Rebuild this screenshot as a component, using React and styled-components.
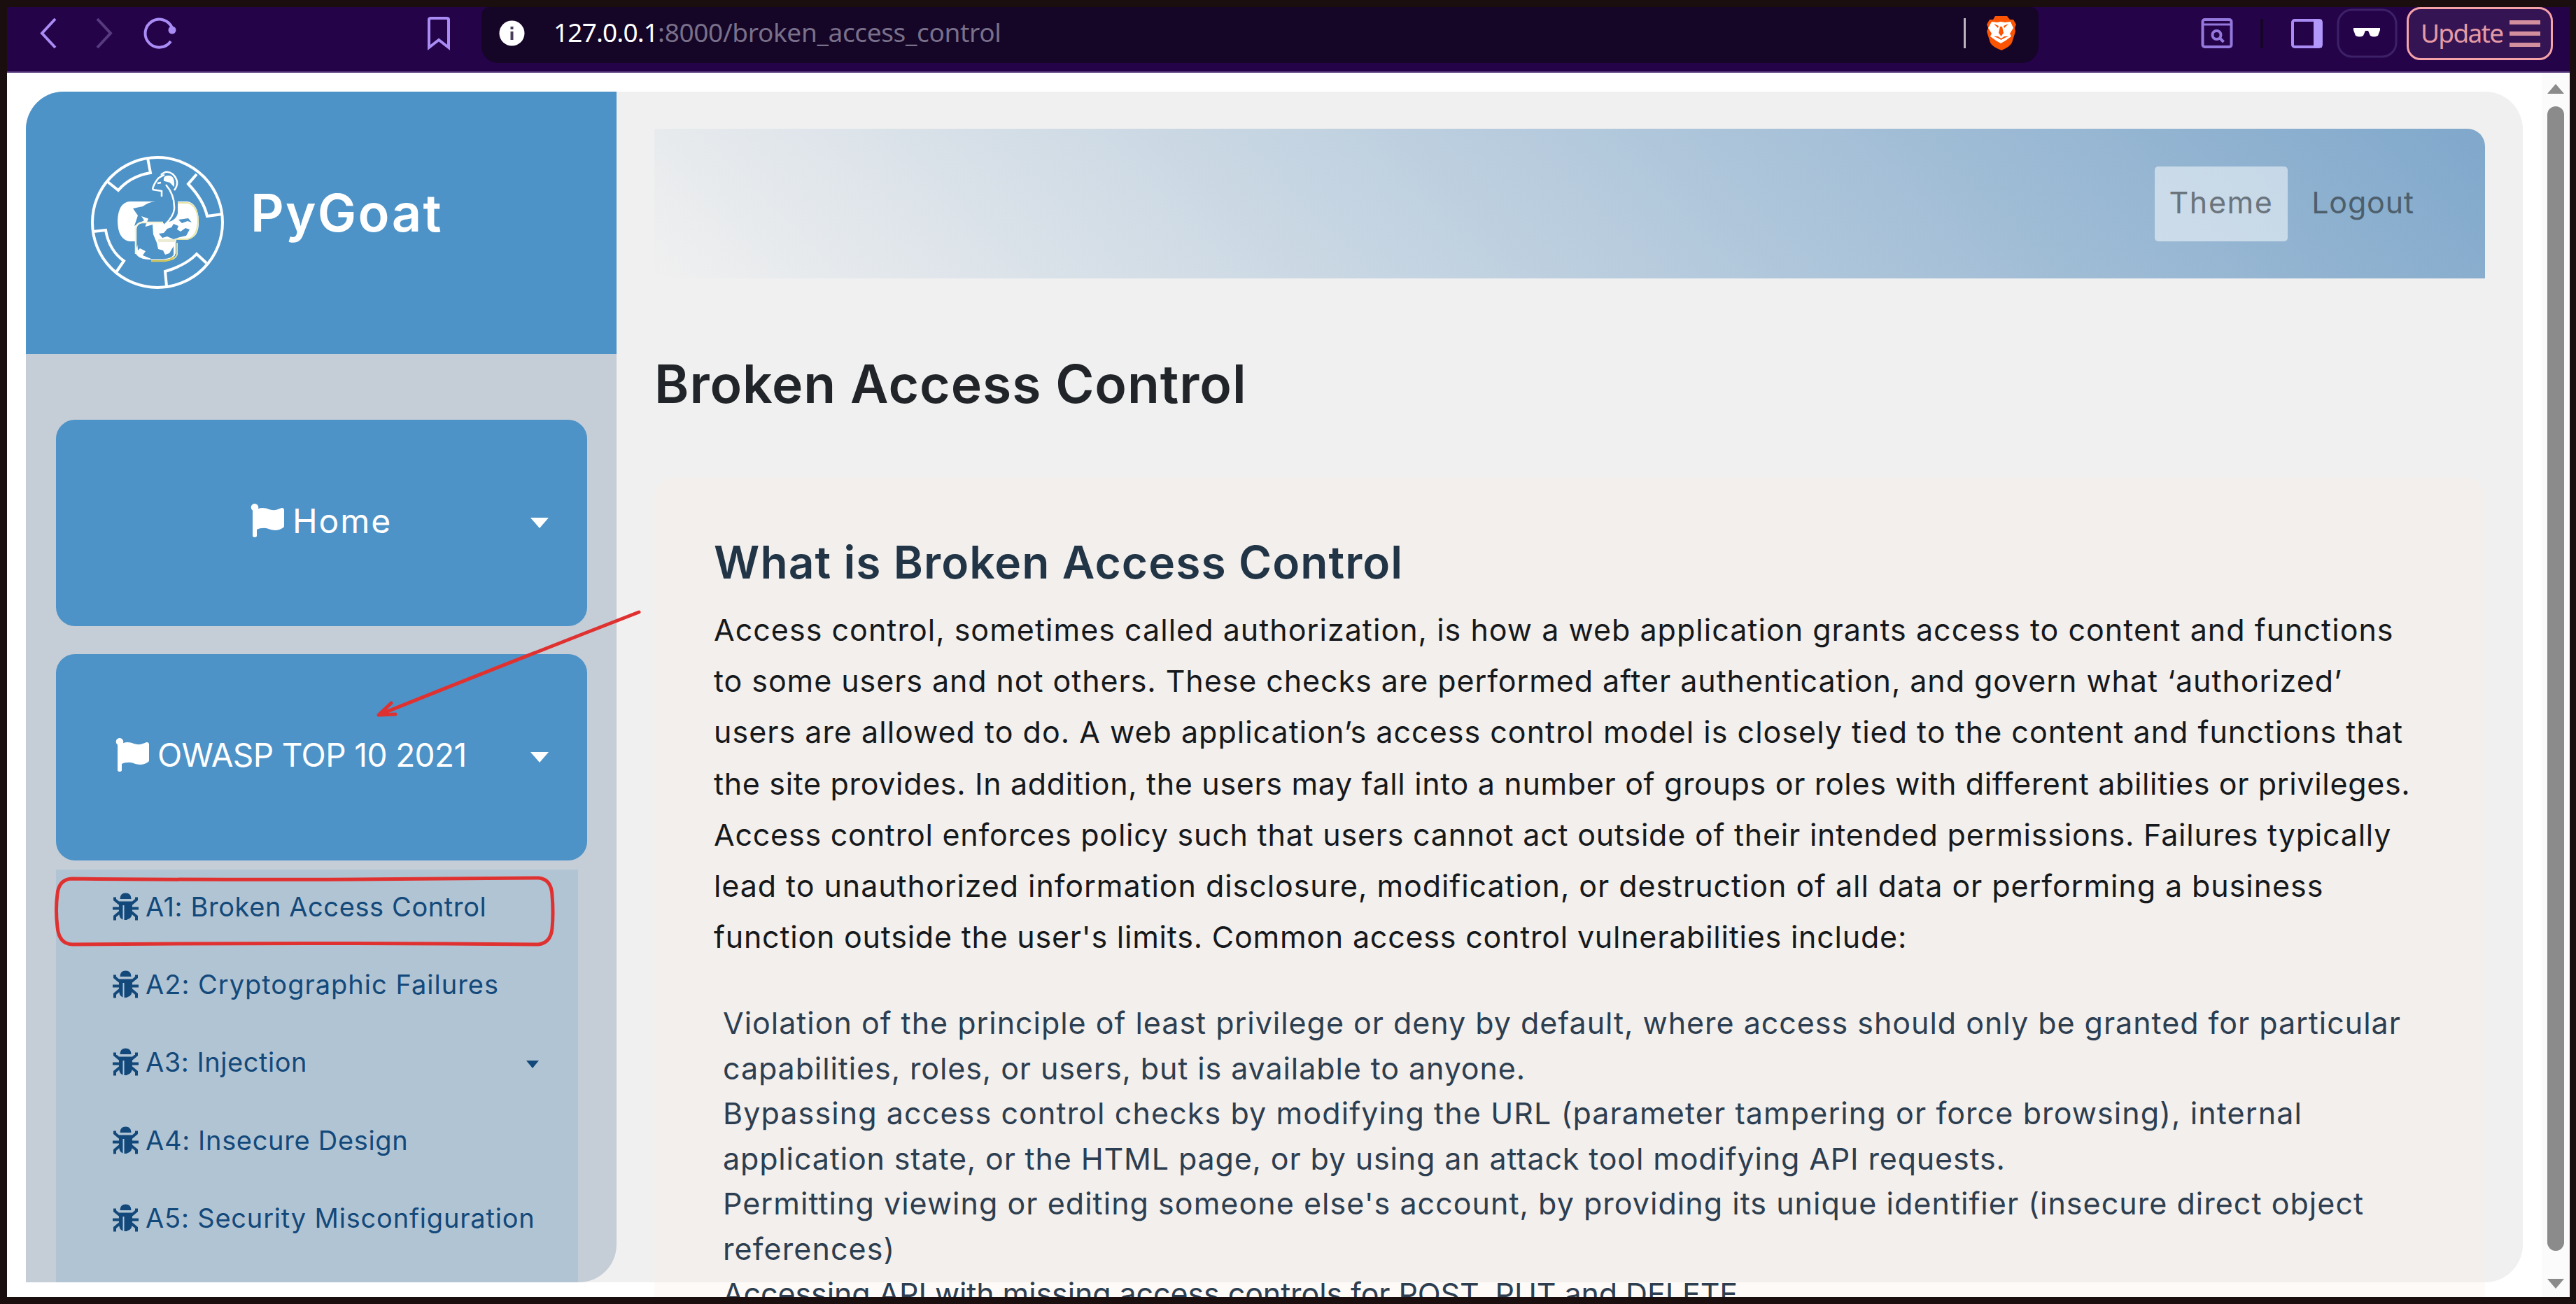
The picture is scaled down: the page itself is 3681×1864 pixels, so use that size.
import React from 'react';
import styled, { createGlobalStyle } from 'styled-components';
import { FaFlag } from 'react-icons/fa';

const GlobalStyle = createGlobalStyle`
  * {
    box-sizing: border-box;
  }

  body {
    margin: 0;
    overflow: hidden;
    font-family: Inter, 'Open Sans', sans-serif;
  }

  svg {
    display: block;
    flex: none;
  }
`;

const Frame = styled.div`
  position: relative;
  display: flex;
  flex-direction: column;
  width: 3681px;
  height: 1864px;
  border: 10px solid #1a0f0e;
  border-right-width: 9px;
  background: #fff;
  overflow: hidden;
`;

/* browser toolbar */

const Toolbar = styled.div`
  flex: none;
  display: flex;
  align-items: flex-start;
  height: 94px;
  background: #240349;
  border-bottom: 2px solid #5b3f80;
  font-family: 'Noto Sans', sans-serif;
`;

const NavIcons = styled.div`
  display: flex;
  width: 678px;
`;

const AddressBar = styled.div`
  display: flex;
  align-items: center;
  width: 2225px;
  height: 80px;
  padding: 0 32px 6px 25px;
  border-radius: 12px 12px 24px 24px;
  background: #150527;
`;

const Url = styled.div`
  flex: 1;
  margin: -4px 0 0 41px;
  color: #79708a;
  font-size: 37px;
  letter-spacing: -.35px;
  white-space: nowrap;
`;

const Host = styled.span`
  color: #fff;
  letter-spacing: -.85px;
`;

const ToolbarActions = styled.div`
  display: flex;
  width: 526px;
`;

const UpdateButton = styled.button`
  display: flex;
  align-items: center;
  gap: 10px;
  width: 209px;
  height: 76px;
  padding: 0 0 0 17px;
  border: 3px solid #f5a3a8;
  border-radius: 20px;
  background: #341452;
  color: #e59ba5;
  font: 400 37px 'Noto Sans', sans-serif;
  letter-spacing: -1.7px;
`;

const UpdateLabel = styled.span`
  margin-top: -3px;
`;

/* page */

const Page = styled.div`
  flex: 1;
  display: flex;
  min-height: 0;
`;

const Viewport = styled.div`
  flex: 1;
  padding: 27px 27px 0;
  overflow: hidden;
`;

const Shell = styled.div`
  display: flex;
  height: 1702px;
  border-radius: 54px 54px 54px 0;
  background: #f0f0f0;
`;

const Sidebar = styled.aside`
  flex: none;
  display: flex;
  flex-direction: column;
  width: 844px;
  border-radius: 54px 0 54px 0;
  background: #c5ced7;
  overflow: hidden;
`;

const Brand = styled.div`
  flex: none;
  display: flex;
  height: 375px;
  padding: 90px 0 0 91px;
  background: #4d93c8;
`;

const BrandName = styled.div`
  margin: 40px 0 0 36px;
  color: #fff;
  font-size: 74px;
  font-weight: 600;
  line-height: 86px;
  letter-spacing: ${(props) => props.$track}px;
`;

const Menu = styled.nav`
  display: flex;
  flex-direction: column;
  padding: 94px 42px 0 43px;
`;

const MenuCard = styled.div`
  display: flex;
  align-items: center;
  height: 295px;
  margin-bottom: ${(props) => (props.$open ? 13 : 40)}px;
  padding: 0 55px 7px ${(props) => (props.$open ? 85 : 278)}px;
  border-radius: 27px;
  background: #4d93c8;
  color: #fff;
  font-size: ${(props) => (props.$open ? 46 : 48)}px;
  letter-spacing: ${(props) => props.$track}px;
  white-space: nowrap;
`;

const MenuLabel = styled.span`
  flex: 1;
  margin-left: 12px;
`;

const Caret = styled.span`
  flex: none;
  margin-top: 6px;
  border-style: solid;
  border-color: currentColor transparent transparent;
  border-width: ${(props) => props.$size}px ${(props) => props.$size * 0.9}px 0;
`;

const SubMenu = styled.ul`
  width: 746px;
  height: 620px;
  margin: 0;
  padding: 0;
  list-style: none;
  background: #b1c4d4;
`;

const SubItem = styled.li`
  display: flex;
  align-items: center;
  height: 111.3px;
  padding: 0 56px 6px 81px;
  color: #13497a;
  font-size: 38px;
  letter-spacing: ${(props) => props.$track}px;
  white-space: nowrap;
`;

const SubLabel = styled.span`
  flex: 1;
  margin-left: 10px;
`;

const Content = styled.main`
  display: flex;
  flex-direction: column;
  width: 2670px;
  padding: 53px 0 0 54px;
`;

const NavBar = styled.div`
  flex: none;
  display: flex;
  justify-content: flex-end;
  gap: 14px;
  height: 214px;
  padding: 54px 81px 0 0;
  border-top-right-radius: 25px;
  background: linear-gradient(45deg, #f0f0f0, #80a8cb);
`;

const NavLink = styled.a`
  display: flex;
  align-items: center;
  justify-content: center;
  width: ${(props) => (props.$active ? 190 : 187)}px;
  height: 107px;
  padding-bottom: 5px;
  border-radius: 5px;
  background: ${(props) => (props.$active ? 'rgba(255, 255, 255, .5)' : 'none')};
  color: ${(props) => (props.$active ? '#6a747c' : '#4d5f6d')};
  font-size: 43px;
  letter-spacing: ${(props) => props.$track}px;
`;

const Title = styled.h1`
  flex: none;
  margin: 102px 0 86px;
  color: #212529;
  font-size: 75px;
  font-weight: 600;
  line-height: 97px;
  letter-spacing: ${(props) => props.$track}px;
`;

/* runs past the bottom edge of the shell */
const Panel = styled.section`
  flex: none;
  height: 1200px;
  padding: 81px 85px;
  border-radius: 27px;
  background: rgba(251, 238, 228, .27);
`;

const Heading = styled.h2`
  margin: 0;
  color: #213546;
  font-size: 64px;
  font-weight: 600;
  line-height: 80px;
  letter-spacing: ${(props) => props.$track}px;
`;

const Paragraph = styled.p`
  margin: 20px 0 0;
  color: #16191c;
  font-size: 43px;
  line-height: 73.2px;
`;

const List = styled.div`
  margin: 54px 0 0 13px;
  color: #2c3e50;
  font-size: 43px;
  line-height: 64.5px;
`;

const Line = styled.span`
  display: block;
  white-space: nowrap;
  letter-spacing: ${(props) => props.$track}px;
`;

const Scrollbar = styled.div`
  flex: none;
  display: flex;
  flex-direction: column;
  align-items: center;
  width: 40px;
  padding-top: 16px;
  background: #fbfbfb;
  color: #8b8b8b;
`;

const ScrollArrow = styled.span`
  border: 12px solid transparent;
  border-width: ${(props) => (props.$down ? '14px 12px 0' : '0 12px 14px')};
  border-${(props) => (props.$down ? 'top' : 'bottom')}-color: currentColor;
`;

const ScrollThumb = styled.span`
  width: 24px;
  height: 1636px;
  margin: 18px 0 40px;
  border-radius: 12px;
  background: currentColor;
`;

/* hand drawn marks over the page */
const Marks = styled.svg`
  position: absolute;
  top: 0;
  left: 0;
  pointer-events: none;
`;

const menuItems = [
  { label: 'A1: Broken Access Control', track: 0.6 },
  { label: 'A2: Cryptographic Failures', track: 1 },
  { label: 'A3: Injection', track: 0.55, caret: true },
  { label: 'A4: Insecure Design', track: 0.68 },
  { label: 'A5: Security Misconfiguration', track: 0.81 },
];

const intro = [
  ['Access control, sometimes called authorization, is how a web application grants access to content and functions', 1.02],
  ['to some users and not others. These checks are performed after authentication, and govern what ‘authorized’', 0.92],
  ['users are allowed to do. A web application’s access control model is closely tied to the content and functions that', 1.01],
  ['the site provides. In addition, the users may fall into a number of groups or roles with different abilities or privileges.', 0.66],
  ['Access control enforces policy such that users cannot act outside of their intended permissions. Failures typically', 0.77],
  ['lead to unauthorized information disclosure, modification, or destruction of all data or performing a business', 0.93],
  ["function outside the user's limits. Common access control vulnerabilities include:", 0.77],
];

const vulnerabilities = [
  ['Violation of the principle of least privilege or deny by default, where access should only be granted for particular', 0.97],
  ['capabilities, roles, or users, but is available to anyone.', 0.9],
  ['Bypassing access control checks by modifying the URL (parameter tampering or force browsing), internal', 1.1],
  ['application state, or the HTML page, or by using an attack tool modifying API requests.', 0.85],
  ["Permitting viewing or editing someone else's account, by providing its unique identifier (insecure direct object", 1.03],
  ['references)', 1.1],
  ['Accessing API with missing access controls for POST, PUT and DELETE', -0.1],
];

const Logo = () => (
  <svg width="194" height="194" viewBox="0 0 194 194" fill="none" stroke="#fff" strokeWidth="4">
    <circle cx="97" cy="97" r="93" />
    <path d="M83 5l4 21Q58 31 41 51L26 39M153 28l-12 14Q163 65 168 88l22-3M5 110l18-2Q28 137 49 152l-11 16M110 188l-2-21Q138 158 153 142l14 13" />
    <path d="M94 67H57q-16 2-17 27 0 27 17 30h8V110q1-9 8-13h34q16-1 19-13V67h14q15 3 16 27t-15 27h-43v4h25v16q-2 9-14 9H84q-17-1-19-12" fill="#fff" stroke="none" />
    <path d="M62 77l14-3q8-6 18-7l10-7 4-15q10 14 11 35l-2 12-9 8-4-3-3-12-2 10-6-5-2-9-3 12-14-5 4 6-14 8 5-15z" fill="#4d93c8" stroke="none" />
    <path d="M67 110q2-9 10-11l3 4 10-3 1 14 5 12 2 9 7 2 3 6 6-2 6-10v12q-3 6-15 6H88l-12-5 4-6-8-4-3 3z" fill="#4d93c8" stroke="none" />
    <path d="M99 113l7-1 5-6 6-2 3-5 7 3-2 5 5 3 7-5 6 2-5 9-9 2-9 3-9-4-7 2zM127 93l14-2 5 6-6-2-8 3z" fill="#4d93c8" stroke="none" />
    <path d="M90 50q1-7 8-16 5-4 9-5M90 50l13 2v8M109 43q13 15 12 35-1 10-13 22M97 41l5-1" strokeWidth="2.5" />
    <path d="M102 29q8-8 17-1 11 11 2 23" strokeWidth="2.5" />
    <path d="M107 37q-1-7 7-6 7 1 6 13l-5-5z" fill="#fff" strokeWidth="2" />
    <path d="M126 69h14q14 3 15 25-1 24-15 27h-17M125 126v17q-3 8-16 8" stroke="#e6e3a5" strokeWidth="2" />
    <path d="M98 123h26" stroke="#ecebd3" strokeWidth="4" />
    <path d="M88 152h19q9-1 14-6" stroke="#d9c957" strokeWidth="2.5" />
    <path d="M66 142V106q1-8 9-9h30" stroke="#f6f4d8" strokeWidth="2.5" />
  </svg>
);

const BugIcon = () => (
  <svg width="37" height="40" viewBox="0 0 37 40">
    <path d="M10.500 9q0-8.500 8-8.500t8 8.500z" fill="currentColor" />
    <path d="M9 12.500h19V28q0 9-7.500 10.500V18h-6v20.500Q9 37 9 28zM16.500 18h4v21h-4z" fill="currentColor" fillRule="evenodd" />
    <path d="M3 6.500v3.500l7 6M34 6.500v3.500l-7 6M0 22.500h10M37 22.500h-10M10 28l-7 6v5.500M27 28l7 6v5.500" fill="none" stroke="currentColor" strokeWidth="4" />
  </svg>
);

const BrowserNav = () => (
  <svg width="678" height="80" viewBox="10 10 678 80" fill="none" stroke="#a98df5" strokeWidth="4">
    <path d="M79 27L60 47.500l19 20.500" />
    <path d="M139 27l19 20.500L139 68" stroke="#573a80" />
    <path d="M244 59a20 20 0 1 1 2-19" />
    <circle cx="246" cy="43" r="5.500" fill="#a98df5" stroke="none" />
    <path d="M613 28q0-2 3-2h22q3 0 3 2v40l-14-11-14 11z" />
  </svg>
);

const InfoIcon = () => (
  <svg width="37" height="37" viewBox="0 0 37 37">
    <circle cx="18.500" cy="18.500" r="18" fill="#fff" />
    <path d="M16.500 16h4v12h-4zM16.500 9h4v4h-4z" fill="#4a3d5c" />
  </svg>
);

const BraveIcon = () => (
  <svg width="75" height="50" viewBox="2806 22 75 50">
    <path d="M2806 26h3v43h-3z" fill="#b9b4c0" />
    <path d="M2851 23h17l4 5 5 0 4 7-2 5 1 5-5 16q-3 6-15 11-13-5-16-11l-5-16 2-5-2-5 4-7 5 0z" fill="#fb5402" />
    <path d="M2846 31l8 1 5-1 6 1 8-1 4 9-5 8 2 4-8 6-7 4-7-4-8-6 2-4-5-8z" fill="#fff" />
    <path d="M2849 34l7 3-1 3zM2870 34l-7 3 1 3zM2858 38h3l2 9-3.500 5-3.500-5zM2849 52l6 0 4.500 3 4.500-3 6 0-5 2-5.500 3-5.500-3z" fill="#fb5402" />
  </svg>
);

const ActionIcons = () => (
  <svg width="526" height="80" viewBox="2913 10 526 80" fill="none" stroke="#9478dc" strokeWidth="4">
    <rect x="3147.500" y="28" width="41" height="39" rx="3" />
    <path d="M3148 35h42" strokeWidth="3" />
    <circle cx="3167.500" cy="50" r="6" />
    <path d="M3171.500 54l6 6" />
    <path d="M3232 27v42" stroke="#150527" />
    <rect x="3276" y="29" width="41" height="38" rx="3" stroke="#a98df5" />
    <path d="M3306 28h12v40h-12z" fill="#b298fb" stroke="none" />
    <rect x="3341" y="14" width="83" height="67" rx="20" stroke="#3d2168" strokeWidth="3" />
    <path d="M3363 40h38v3l-3 8q-6 3-11 0l-3-7h-4l-3 7q-5 3-11 0l-3-8z" fill="#fff" stroke="none" />
  </svg>
);

const App = () => (
  <>
    <GlobalStyle />
    <Frame>
      <Toolbar>
        <NavIcons>
          <BrowserNav />
        </NavIcons>
        <AddressBar>
          <InfoIcon />
          <Url>
            <Host>127.0.0.1</Host>
            :8000/broken_access_control
          </Url>
          <BraveIcon />
        </AddressBar>
        <ToolbarActions>
          <ActionIcons />
        </ToolbarActions>
        <UpdateButton>
          <UpdateLabel>Update</UpdateLabel>
          <svg width="44" height="38" viewBox="0 0 44 38" fill="#d48f9f">
            <path d="M0 0h44v6H0zM0 16h44v6H0zM0 32h44v6H0z" />
          </svg>
        </UpdateButton>
      </Toolbar>
      <Page>
        <Viewport>
          <Shell>
            <Sidebar>
              <Brand>
                <Logo />
                <BrandName $track={2.3}>PyGoat</BrandName>
              </Brand>
              <Menu>
                <MenuCard $track={1.9}>
                  <FaFlag size={48} />
                  <MenuLabel>Home</MenuLabel>
                  <Caret $size={15} />
                </MenuCard>
                <MenuCard $open $track={-0.6}>
                  <FaFlag size={48} />
                  <MenuLabel>OWASP TOP 10 2021</MenuLabel>
                  <Caret $size={15} />
                </MenuCard>
                <SubMenu>
                  {menuItems.map((item) => (
                    <SubItem key={item.label} $track={item.track}>
                      <BugIcon />
                      <SubLabel>{item.label}</SubLabel>
                      {item.caret && <Caret $size={11} />}
                    </SubItem>
                  ))}
                </SubMenu>
              </Menu>
            </Sidebar>
            <Content>
              <NavBar>
                <NavLink $active $track={1.6}>Theme</NavLink>
                <NavLink $track={0.8}>Logout</NavLink>
              </NavBar>
              <Title $track={0.95}>Broken Access Control</Title>
              <Panel>
                <Heading $track={1.1}>What is Broken Access Control</Heading>
                <Paragraph>
                  {intro.map(([text, track]) => (
                    <Line key={text} $track={track}>{text}</Line>
                  ))}
                </Paragraph>
                <List>
                  {vulnerabilities.map(([text, track]) => (
                    <Line key={text} $track={track}>{text}</Line>
                  ))}
                </List>
              </Panel>
            </Content>
          </Shell>
        </Viewport>
        <Scrollbar>
          <ScrollArrow />
          <ScrollThumb />
          <ScrollArrow $down />
        </Scrollbar>
      </Page>
      <Marks width="930" height="1380" viewBox="10 10 930 1380" fill="none" stroke="#e03131" strokeWidth="5" strokeLinecap="round">
        <path d="M913 875Q720 950 541 1022M541 1022l18-17M541 1022l24-1" />
        <path d="M103 1256q250 3 667-1 18 2 19 25 2 25 0 47-2 21-20 23-330-3-666 0-19-1-21-25-3-25 0-47 2-21 21-22z" />
      </Marks>
    </Frame>
  </>
);

export default App;
